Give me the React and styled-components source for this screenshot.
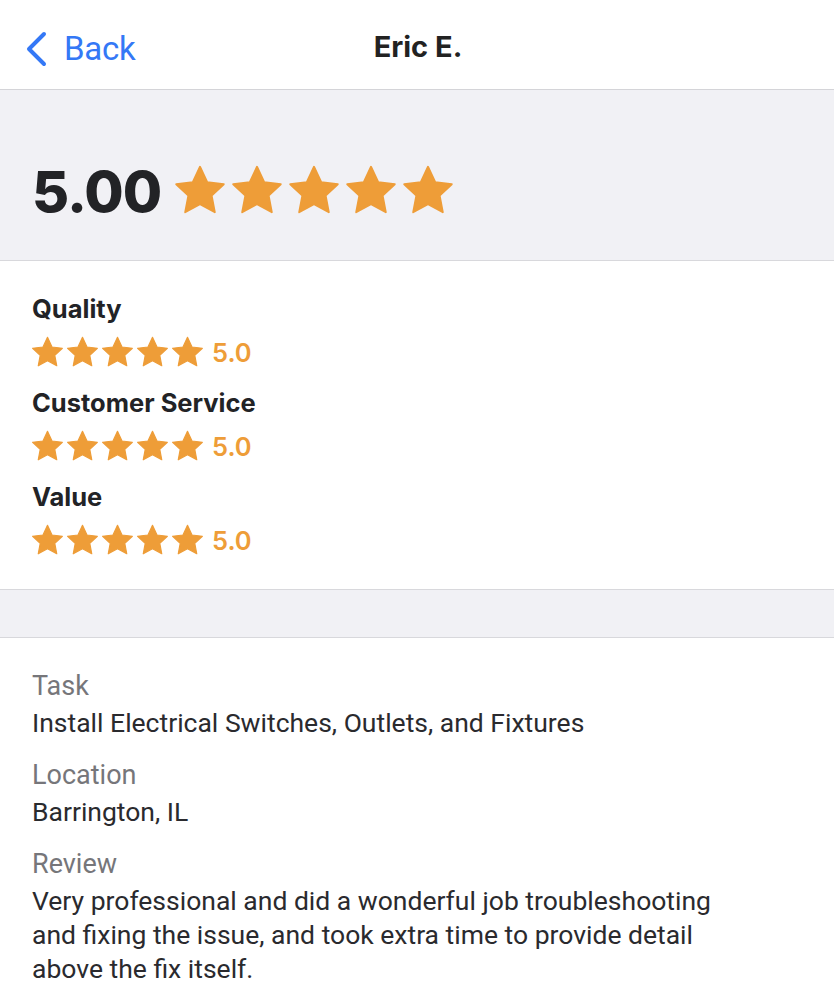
import React from 'react'
import styled, { createGlobalStyle } from 'styled-components'

const GlobalStyle = createGlobalStyle`
  body {
    margin: 0;
    background: #ffffff;
    font-family: Roboto, "Liberation Sans", sans-serif;
    -webkit-font-smoothing: antialiased;
  }
`

const ORANGE = '#ee9d38'

function Star({ size }) {
  return (
    <svg width={size} height={size} viewBox="0 0 24 24">
      <path
        d="M12 1.6l3.1 6.6 7.1.9-5.2 4.9 1.35 7.1L12 17.6l-6.35 3.5L7 14l-5.2-4.9 7.1-.9z"
        fill={ORANGE}
        stroke={ORANGE}
        strokeWidth="0.8"
        strokeLinejoin="round"
      />
    </svg>
  )
}

function Stars({ size, gap }) {
  return (
    <StarRow gap={gap}>
      {[0, 1, 2, 3, 4].map(i => <Star key={i} size={size} />)}
    </StarRow>
  )
}

const ratings = [
  { label: 'Quality', value: '5.0' },
  { label: 'Customer Service', value: '5.0' },
  { label: 'Value', value: '5.0' },
]

const details = [
  { label: 'Task', value: 'Install Electrical Switches, Outlets, and Fixtures' },
  { label: 'Location', value: 'Barrington, IL' },
  {
    label: 'Review',
    value: 'Very professional and did a wonderful job troubleshooting and fixing the issue, and took extra time to provide detail above the fix itself.',
  },
]

export default function App() {
  return (
    <>
      <GlobalStyle />
      <Page>
        <Header>
          <BackButton>
            <svg width="24" height="36" viewBox="0 0 24 36">
              <path d="M20 3L5 18l15 15" fill="none" stroke="#3478f6" strokeWidth="4" strokeLinecap="round" strokeLinejoin="round" />
            </svg>
            <span>Back</span>
          </BackButton>
          <Title>Eric E.</Title>
        </Header>

        <Summary>
          <BigScore>5.00</BigScore>
          <Stars size={56} gap={1} />
        </Summary>

        <Ratings>
          {ratings.map(r => (
            <RatingItem key={r.label}>
              <RatingLabel>{r.label}</RatingLabel>
              <RatingLine>
                <Stars size={35} gap={-1.5} />
                <RatingValue>{r.value}</RatingValue>
              </RatingLine>
            </RatingItem>
          ))}
        </Ratings>

        <Spacer />

        <Details>
          {details.map(d => (
            <DetailItem key={d.label}>
              <DetailLabel>{d.label}</DetailLabel>
              <DetailValue>{d.value}</DetailValue>
            </DetailItem>
          ))}
        </Details>
      </Page>
    </>
  )
}

const Page = styled.div`
  width: 834px;
  min-height: 1000px;
  background: #fff;
  overflow: hidden;
`

const Header = styled.div`
  height: 89px;
  display: flex;
  align-items: center;
  justify-content: center;
  position: relative;
  border-bottom: 1px solid #d4d4d8;
`

const BackButton = styled.div`
  position: absolute;
  left: 24px;
  top: 29px;
  display: flex;
  align-items: center;
  gap: 16px;
  color: #3478f6;
  font-family: Roboto, "Liberation Sans", sans-serif;
  font-size: 33px;
  letter-spacing: -0.3px;
`

const Title = styled.div`
  font-family: Inter, "Liberation Sans", sans-serif;
  font-weight: 700;
  font-size: 29px;
  color: #222;
  margin: 4px 0 0 2px;
`

const StarRow = styled.div`
  display: flex;
  align-items: center;
  gap: ${p => p.gap}px;
`

const Summary = styled.div`
  height: 171px;
  background: #f1f1f5;
  border-bottom: 1px solid #d8d8dc;
  display: flex;
  align-items: center;
  padding: 32px 32px 0;
  box-sizing: border-box;
  gap: 11px;
`

const BigScore = styled.div`
  font-family: Inter, "Liberation Sans", sans-serif;
  font-weight: 800;
  font-size: 57px;
  color: #222326;
  letter-spacing: -1px;
`

const Ratings = styled.div`
  padding: 30px 32px 31px;
  display: flex;
  flex-direction: column;
  gap: 15px;
  border-bottom: 1px solid #d8d8dc;
`

const RatingItem = styled.div`
  display: flex;
  flex-direction: column;
  gap: 8px;
`

const RatingLabel = styled.div`
  font-family: Inter, "Liberation Sans", sans-serif;
  font-weight: 700;
  font-size: 25.5px;
  line-height: 36px;
  color: #222326;
`

const RatingLine = styled.div`
  display: flex;
  align-items: center;
  gap: 7px;
  margin-left: -2px;
`

const RatingValue = styled.span`
  font-family: Inter, "Liberation Sans", sans-serif;
  font-size: 25.5px;
  font-weight: 600;
  color: ${ORANGE};
`

const Spacer = styled.div`
  height: 47px;
  background: #f1f1f5;
  border-bottom: 1px solid #d8d8dc;
`

const Details = styled.div`
  padding: 31px 32px 20px;
  display: flex;
  flex-direction: column;
  gap: 18px;
`

const DetailItem = styled.div`
  display: flex;
  flex-direction: column;
  gap: 3px;
`

const DetailLabel = styled.div`
  font-family: Roboto, "Liberation Sans", sans-serif;
  font-size: 27px;
  line-height: 34px;
  color: #76767a;
`

const DetailValue = styled.div`
  font-family: Roboto, "Liberation Sans", sans-serif;
  font-size: 26.5px;
  line-height: 34px;
  color: #2a2a2e;
  max-width: 720px;
`
